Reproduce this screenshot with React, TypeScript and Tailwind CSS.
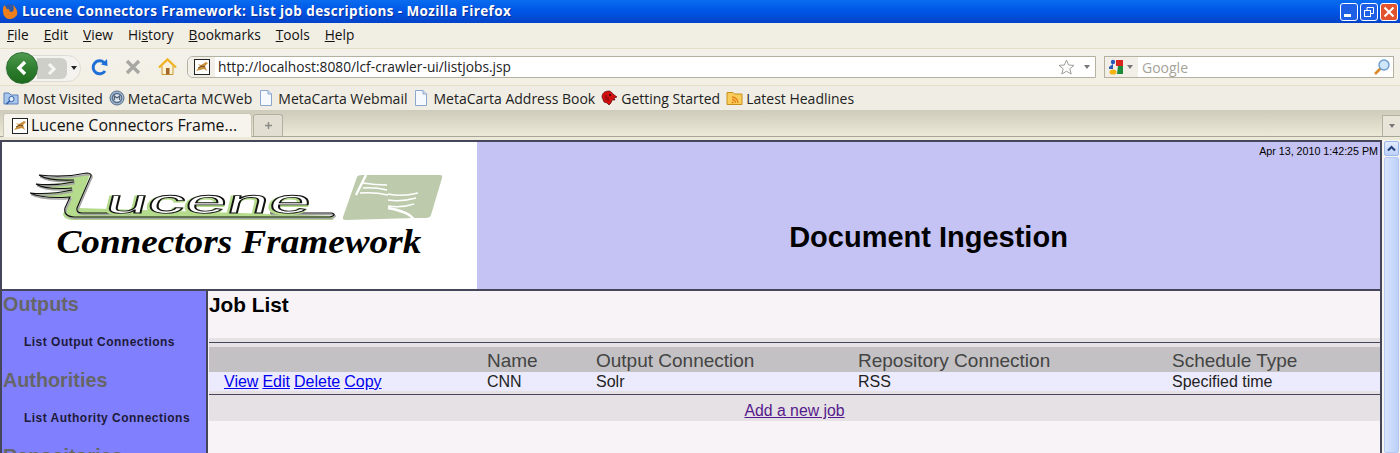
import React from 'react';

const chromeFont = "font-['Open_Sans','Noto_Sans',sans-serif]";

const TomcatIcon = () => (
    <svg width="16" height="16" viewBox="0 0 16 16" className="shrink-0">
        <rect x="0.5" y="0.5" width="15" height="15" fill="#fff" stroke="#222" />
        <path d="M2 12 L6 7 L4 5 L7 6 L12 3 L14 4 L11 7 L13 12 L10 10 L6 11 Z" fill="#c9913f" />
        <path d="M4 9 L8 7 L11 8" fill="none" stroke="#6b4a1f" />
    </svg>
);

const FolderIcon = () => (
    <svg width="17" height="16" viewBox="0 0 17 16" className="shrink-0">
        <path d="M1 3 H6 L8 5 H15 V14 H1 Z" fill="#a9c6ec" stroke="#5a7fb8" />
        <circle cx="8.5" cy="9" r="2.6" fill="#e4effb" stroke="#2f5ea8" />
        <path d="M6.6 11 L3.5 14" stroke="#2f5ea8" strokeWidth="1.6" />
    </svg>
);

const PageIcon = () => (
    <svg width="14" height="16" viewBox="0 0 14 16" className="shrink-0">
        <path d="M1.5 0.5 H9 L12.5 4 V15.5 H1.5 Z" fill="#f6f9fe" stroke="#8ca6d0" />
        <path d="M9 0.5 V4 H12.5" fill="#cfe0f6" stroke="#8ca6d0" />
    </svg>
);

const McWebIcon = () => (
    <svg width="16" height="16" viewBox="0 0 16 16" className="shrink-0">
        <circle cx="8" cy="8" r="7" fill="#9db7d6" stroke="#5d6f87" />
        <circle cx="8" cy="8" r="4.5" fill="#dfe8f2" stroke="#5d6f87" strokeWidth="1.5" />
        <path d="M5.5 10 V6 L8 8 L10.5 6 V10" fill="none" stroke="#52637a" strokeWidth="1.2" />
    </svg>
);

const RedHatIcon = () => (
    <svg width="17" height="16" viewBox="0 0 17 16" className="shrink-0">
        <path d="M1 7 C1 3 4 1 8 1 C10 1 11 3 12 4 L16 7 L13 8 L14 10 L11 10 L10 13 L8 15 L6 13 L3 12 Z" fill="#d40e0e" stroke="#5a0a0a" strokeWidth="0.7" />
        <circle cx="9" cy="5" r="0.9" fill="#111" />
        <path d="M5 5 L5 10 M7 7 L7 11" stroke="#6e0808" />
    </svg>
);

const RssFolderIcon = () => (
    <svg width="17" height="16" viewBox="0 0 17 16" className="shrink-0">
        <path d="M1 2.5 H7 L8.5 4 H16 V14.5 H1 Z" fill="#f9cd5b" stroke="#c88f1c" />
        <path d="M6 7 A6 6 0 0 1 12 13 M6 9.5 A3.5 3.5 0 0 1 9.5 13" fill="none" stroke="#e8821a" strokeWidth="1.4" />
        <circle cx="6.6" cy="12.4" r="1" fill="#e8821a" />
    </svg>
);

const outline =
    'M9 3 Q34 6 57 1 Q63 1 60 6 L47 36 Q46 41 52 41 L110 41 M9 3 Q18 9 44 8 M6 12 Q24 14 44 10 M6 12 Q16 18 42 16 M0 21 Q20 23 42 18 M0 21 Q12 27 40 25 L35 36 Q33 44 44 45 L300 45 Q307 43 302 41 L240 41';

const LuceneLogo = () => (
    <svg width="415" height="52" viewBox="0 0 415 52" className="block" role="img" aria-label="Lucene">
        {/* green body of the wings and swoosh */}
        <path
            d="M10 5 Q34 6 60 2 L48 36 L304 44 L303 48 L42 48 Q33 47 33 42 L42 25 Q16 27 1 21 Q20 22 43 18 Q20 19 6 13 Q24 13 46 9 Q24 12 10 5 Z"
            fill="#b5dc8c"
        />
        <path d={outline} fill="none" stroke="#a5a5a5" strokeWidth="1.6" transform="translate(1 1.5)" />
        <path d={outline} fill="none" stroke="#111" strokeWidth="1.1" />
        {/* wordmark letters stay real text */}
        <text x="84" y="41" fontFamily="'Liberation Sans',sans-serif" fontSize="33" textLength="205" lengthAdjust="spacingAndGlyphs" fill="#b5dc8c" stroke="#b5dc8c" strokeWidth="2" transform="translate(-1.5 1.5) skewX(-14)">ucene</text>
        <text x="84" y="41" fontFamily="'Liberation Sans',sans-serif" fontSize="33" textLength="205" lengthAdjust="spacingAndGlyphs" fill="#fff" stroke="#111" strokeWidth="0.9" transform="skewX(-14)">ucene</text>
        {/* flag mark */}
        <path d="M327 5 Q328 3 332 3 L410 3 Q413 3 412 6 L401 43 Q400 46 396 46 L384 46 L316 48 Q312 48 313 45 Z" fill="#bdcbac" />
        <path d="M326 23 L336 3 M384 48 Q380 40 358 36" fill="none" stroke="#fff" strokeWidth="2.5" />
        <path
            d="M333 11 Q345 13 357 13 M333 16 Q345 15 357 18 M330 21 Q345 20 358 23 M358 22 Q372 25 388 21 M358 28 Q372 30 386 26 M358 34 Q372 36 384 32"
            fill="none"
            stroke="#fff"
            strokeWidth="1.5"
        />
    </svg>
);

const WindowButton = ({ children, red }: { children: React.ReactNode; red?: boolean }) => (
    <div className={`w-[18px] h-[18px] rounded-[3px] border border-white flex items-center justify-center ${red ? 'bg-[#e2532d]' : 'bg-[#1f5fe6]'}`}>
        {children}
    </div>
);

const Underlined = ({ k, rest }: { k: string; rest: string }) => (
    <span><span className="underline">{k}</span>{rest}</span>
);

const NavSection = ({ title, item }: { title: string; item: string }) => (
    <div>
        <div className="h-[29px] pl-[1px] text-[19.8px] leading-[26px] font-bold text-[#666666]">{title}</div>
        <div className="h-[47px] pl-[22px] pt-[14px] text-[12px] leading-[16px] font-bold text-[#1d1a3a] tracking-[0.48px]">{item}</div>
    </div>
);

const App: React.FC = () => {
    return (
        <div className="w-[1400px] h-[453px] overflow-hidden flex flex-col bg-[#ece9d8]">
            {/* Title bar */}
            <div className="h-[23px] shrink-0 flex items-center justify-between pl-[2px] pr-[2px] bg-gradient-to-b from-[#0a6cf0] via-[#0055e5] to-[#0343c8]">
                <div className="flex items-center gap-[4px]">
                    <svg width="16" height="16" viewBox="0 0 16 16">
                        <circle cx="8" cy="8" r="7.5" fill="#2b58a8" />
                        <path d="M2 1 Q-1 9 4 14 Q10 17 15 11 Q16 5 11 1 Q13 6 10 8 Q7 8 7 5 Q4 6 4 3 Z" fill="#ee7f1d" />
                    </svg>
                    <span className="text-[13.5px] font-bold text-white font-['Open_Sans',sans-serif] tracking-[0.4px] [text-shadow:1px_1px_0_#0a2f9a]">
                        Lucene Connectors Framework: List job descriptions - Mozilla Firefox
                    </span>
                </div>
                <div className="flex gap-[2px]">
                    <WindowButton><div className="w-[7px] h-[3px] bg-white mt-[8px] mr-[3px]" /></WindowButton>
                    <WindowButton>
                        <svg width="12" height="12" viewBox="0 0 12 12" fill="none" stroke="#fff"><rect x="1.5" y="4.5" width="6" height="6" /><path d="M4 4 V1.5 H10.5 V7.5 H8" /></svg>
                    </WindowButton>
                    <WindowButton red>
                        <svg width="12" height="12" viewBox="0 0 12 12" stroke="#fff" strokeWidth="2"><path d="M1.5 1.5 L10.5 10.5 M10.5 1.5 L1.5 10.5" /></svg>
                    </WindowButton>
                </div>
            </div>

            {/* Menu bar */}
            <div className={`h-[26px] shrink-0 flex items-center gap-[15px] pl-[7px] text-[13.7px] text-[#111] bg-[#f1eee4] border-b border-[#e6dfc8] ${chromeFont}`}>
                <Underlined k="F" rest="ile" />
                <Underlined k="E" rest="dit" />
                <Underlined k="V" rest="iew" />
                <span>Hi<span className="underline">s</span>tory</span>
                <Underlined k="B" rest="ookmarks" />
                <Underlined k="T" rest="ools" />
                <Underlined k="H" rest="elp" />
            </div>

            {/* Navigation bar */}
            <div className={`h-[37px] shrink-0 flex items-center pl-[3px] pr-[6px] bg-gradient-to-b from-[#f3f1ea] to-[#f3efe4] border-b border-[#e6dfc8] ${chromeFont}`}>
                <div className="relative w-[77px] h-[30px] shrink-0 flex items-center">
                    <div className="absolute left-[2px] top-[3px] w-[76px] h-[27px] rounded-full bg-[#f4f3ef] border border-[#dddbd2]" />
                    <div className="absolute left-[34px] top-[6px] w-[30px] h-[21px] rounded-r-[6px] bg-[#cfcfca] flex items-center justify-center">
                        <svg width="10" height="14" viewBox="0 0 10 14" fill="none" stroke="#f5f5f2" strokeWidth="3"><path d="M2 2 L7 7 L2 12" /></svg>
                    </div>
                    <div className="absolute left-[3px] top-0 w-[32px] h-[32px] rounded-full bg-gradient-to-b from-[#4f9a4f] via-[#2f7f2f] to-[#1d6a1d] border border-[#2f6d35] flex items-center justify-center">
                        <svg width="14" height="16" viewBox="0 0 14 16" fill="none" stroke="#fff" strokeWidth="3.4"><path d="M10 2 L4 8 L10 14" /></svg>
                    </div>
                    <div className="absolute left-[68px] top-[14px] w-0 h-0 border-l-[3.5px] border-r-[3.5px] border-t-[4px] border-l-transparent border-r-transparent border-t-[#222]" />
                </div>
                <div className="ml-[8px] w-[24px] flex justify-center">
                    <svg width="18" height="18" viewBox="0 0 18 18" fill="none">
                        <path d="M14 13 A6.5 6.5 0 1 1 13 4.5" stroke="#1f6fd6" strokeWidth="3" />
                        <path d="M10 6.5 L16.5 8 L16 1 Z" fill="#1f6fd6" />
                    </svg>
                </div>
                <div className="ml-[9px] w-[24px] flex justify-center">
                    <svg width="16" height="16" viewBox="0 0 16 16" stroke="#a7a7a3" strokeWidth="3.4"><path d="M2 2 L14 14 M14 2 L2 14" /></svg>
                </div>
                <div className="ml-[10px] w-[24px] flex justify-center">
                    <svg width="19" height="18" viewBox="0 0 19 18">
                        <path d="M4 8 V16.5 H15 V8" fill="#fdf3d0" stroke="#c99a37" />
                        <path d="M1 9.5 L9.5 1.5 L18 9.5" fill="none" stroke="#f0b323" strokeWidth="2.4" />
                        <rect x="8" y="10" width="3.5" height="6.5" fill="#a6672c" />
                    </svg>
                </div>
                <div className="ml-[8px] w-[909px] h-[22px] shrink-0 flex items-center bg-white border border-[#b5b1a1] rounded-l-[6px]">
                    <div className="w-[27px] h-full flex items-center justify-center bg-[#f1efe8] rounded-l-[6px] shrink-0">
                        <TomcatIcon />
                    </div>
                    <span className="pl-[3px] text-[13.76px] text-[#222] flex-1">http://localhost:8080/lcf-crawler-ui/listjobs.jsp</span>
                    <svg width="17" height="16" viewBox="0 0 17 16" fill="#fff" stroke="#9c9c98"><path d="M8.5 1 L10.6 6 L16 6.4 L11.8 9.8 L13.2 15 L8.5 12.2 L3.8 15 L5.2 9.8 L1 6.4 L6.4 6 Z" /></svg>
                    <div className="ml-[9px] mr-[5px] w-0 h-0 border-l-[3.5px] border-r-[3.5px] border-t-[4px] border-l-transparent border-r-transparent border-t-[#777]" />
                </div>
                <div className="ml-[8px] flex-1 h-[22px] flex items-center bg-white border border-[#b5b1a1]">
                    <div className="w-[33px] h-full flex items-center pl-[3px] gap-[2px] bg-[#f1efe8] shrink-0">
                        <svg width="16" height="16" viewBox="0 0 16 16">
                            <circle cx="5" cy="3" r="2.2" fill="#2a5ab8" />
                            <path d="M1 8 L5 5 V10 H1 Z" fill="#2a5ab8" />
                            <ellipse cx="5" cy="13" rx="3.5" ry="2.6" fill="#f2b411" />
                            <rect x="8" y="1" width="7" height="6" fill="#d8261c" />
                            <path d="M10 7 H15 V15 H9 Z" fill="#1c8c3a" />
                        </svg>
                        <div className="w-0 h-0 ml-[1px] border-l-[3px] border-r-[3px] border-t-[4px] border-l-transparent border-r-transparent border-t-[#777]" />
                    </div>
                    <span className="pl-[4px] text-[14px] text-[#a6a398] flex-1">Google</span>
                    <svg width="18" height="18" viewBox="0 0 18 18" className="mr-[2px]">
                        <path d="M2 16 L8 10" stroke="#d98a2b" strokeWidth="2.6" />
                        <circle cx="11" cy="7" r="5" fill="#cfe6fa" stroke="#6d9ed0" strokeWidth="1.4" />
                    </svg>
                </div>
            </div>

            {/* Bookmarks */}
            <div className={`h-[24px] shrink-0 flex items-center pl-[3px] text-[14px] text-[#222] bg-[#f0eee4] ${chromeFont}`}>
                <div className="flex items-center gap-[3px]"><FolderIcon /><span>Most Visited</span></div>
                <div className="flex items-center gap-[3px] ml-[6px]"><McWebIcon /><span className="tracking-[0.12px]">MetaCarta MCWeb</span></div>
                <div className="flex items-center gap-[5px] ml-[7px]"><PageIcon /><span>MetaCarta Webmail</span></div>
                <div className="flex items-center gap-[5px] ml-[7px]"><PageIcon /><span>MetaCarta Address Book</span></div>
                <div className="flex items-center gap-[3px] ml-[6px]"><RedHatIcon /><span>Getting Started</span></div>
                <div className="flex items-center gap-[3px] ml-[6px]"><RssFolderIcon /><span>Latest Headlines</span></div>
            </div>

            {/* Tab bar */}
            <div className={`h-[27px] shrink-0 flex items-end pl-[3px] bg-gradient-to-b from-[#cfcbba] to-[#ece9d8] border-b border-[#a8a698] ${chromeFont}`}>
                <div className="w-[249px] h-[24px] -mb-[1px] flex items-center gap-[3px] pl-[8px] bg-[#f6f4ec] border border-b-0 border-[#c8c5b6] rounded-t-[3px] text-[15.9px] text-[#111]">
                    <TomcatIcon />
                    <span>Lucene Connectors Frame...</span>
                </div>
                <div className="ml-[1px] w-[30px] h-[22px] flex items-center justify-center bg-[#e2dfd2] border border-b-0 border-[#b3b0a2] rounded-t-[3px]">
                    <svg width="7" height="7" viewBox="0 0 7 7" stroke="#8a8a84" strokeWidth="1.5"><path d="M3.5 0 V7 M0 3.5 H7" /></svg>
                </div>
                <div className="ml-auto w-[18px] h-[21px] flex items-center justify-center bg-[#e8e5d8] border-l border-t border-[#b3b0a2]">
                    <div className="w-0 h-0 border-l-[3.5px] border-r-[3.5px] border-t-[4px] border-l-transparent border-r-transparent border-t-[#777]" />
                </div>
            </div>
            <div className="h-[3px] shrink-0 bg-[#ece9d8]" />

            {/* Page + scrollbar */}
            <div className="flex-1 min-h-0 flex bg-white font-['Liberation_Sans',Arial,sans-serif]">
                <div className="w-[1382px] shrink-0 flex flex-col border-t-2 border-l-2 border-r-2 border-[#46465a] overflow-hidden">
                    {/* Header */}
                    <div className="h-[147px] shrink-0 flex">
                        <div className="w-[475px] shrink-0 bg-white pt-[30px] pl-[28px]">
                            <LuceneLogo />
                            <div className="mt-[-1px] pl-[23.5px] text-[33px] leading-[38px] font-bold italic text-black font-['Liberation_Serif',serif] whitespace-nowrap origin-left scale-x-[1.127]">
                                Connectors Framework
                            </div>
                        </div>
                        <div className="flex-1 bg-[#c5c3f3] relative flex items-center justify-center">
                            <span className="absolute top-[2px] right-[2px] text-[10.7px] leading-[14px] text-black">Apr 13, 2010 1:42:25 PM</span>
                            <h1 className="mt-[45px] text-[29px] font-bold text-black">Document Ingestion</h1>
                        </div>
                    </div>
                    <div className="h-[2px] shrink-0 bg-[#46465a]" />
                    {/* Body */}
                    <div className="flex-1 min-h-0 flex">
                        <div className="w-[204px] shrink-0 bg-[#8080ff]">
                            <NavSection title="Outputs" item="List Output Connections" />
                            <NavSection title="Authorities" item="List Authority Connections" />
                            <NavSection title="Repositories" item="List Repository Connections" />
                        </div>
                        <div className="w-[2px] shrink-0 bg-[#46465a]" />
                        <div className="flex-1 pl-[1px] bg-[#f7f3f7] text-black">
                            <h2 className="h-[47px] text-[20.8px] leading-[27px] font-bold">Job List</h2>
                            <div className="h-[9px] pt-[4px] bg-[#e5e1e5]"><div className="w-full h-[1px] bg-[#46465a]" /></div>
                            <div className="h-[25px] grid grid-cols-[278px_109px_262px_314px_1fr] items-center bg-[#c3c1c3] text-[19px] text-[#444]">
                                <span />
                                <span>Name</span>
                                <span>Output Connection</span>
                                <span>Repository Connection</span>
                                <span>Schedule Type</span>
                            </div>
                            <div className="h-[19px] grid grid-cols-[278px_109px_262px_314px_1fr] items-center bg-[#ecebfd] text-[16px] leading-[19px] text-[#222]">
                                <div className="pl-[15px] flex gap-[4px] text-[#0000ee]">
                                    <a className="underline">View</a>
                                    <a className="underline">Edit</a>
                                    <a className="underline">Delete</a>
                                    <a className="underline">Copy</a>
                                </div>
                                <span>CNN</span>
                                <span>Solr</span>
                                <span>RSS</span>
                                <span>Specified time</span>
                            </div>
                            <div className="h-[3px] bg-[#e5e1e5]" />
                            <div className="h-[1px] bg-[#46465a]" />
                            <div className="h-[26px] pt-[6px] flex items-center justify-center bg-[#e5e1e5] text-[15.8px] text-[#551a8b]">
                                <a className="underline">Add a new job</a>
                            </div>
                        </div>
                    </div>
                </div>
                {/* Scrollbar */}
                <div className="flex-1 bg-[#f6f5ee] flex flex-col pl-[2px] pr-[1px]">
                    <div className="h-[15px] mt-[1px] rounded-[2px] bg-gradient-to-b from-[#e3ecfd] to-[#bcd0f8] border border-[#9bb7ea] flex items-center justify-center">
                        <svg width="9" height="7" viewBox="0 0 9 7" fill="none" stroke="#1f3f7a" strokeWidth="2"><path d="M1 5.5 L4.5 2 L8 5.5" /></svg>
                    </div>
                    <div className="flex-1 mt-[1px] rounded-[2px] bg-gradient-to-r from-[#d8e4fc] to-[#bcd0f8] border border-[#b4c9f3]" />
                </div>
            </div>
        </div>
    );
};

export default App;
